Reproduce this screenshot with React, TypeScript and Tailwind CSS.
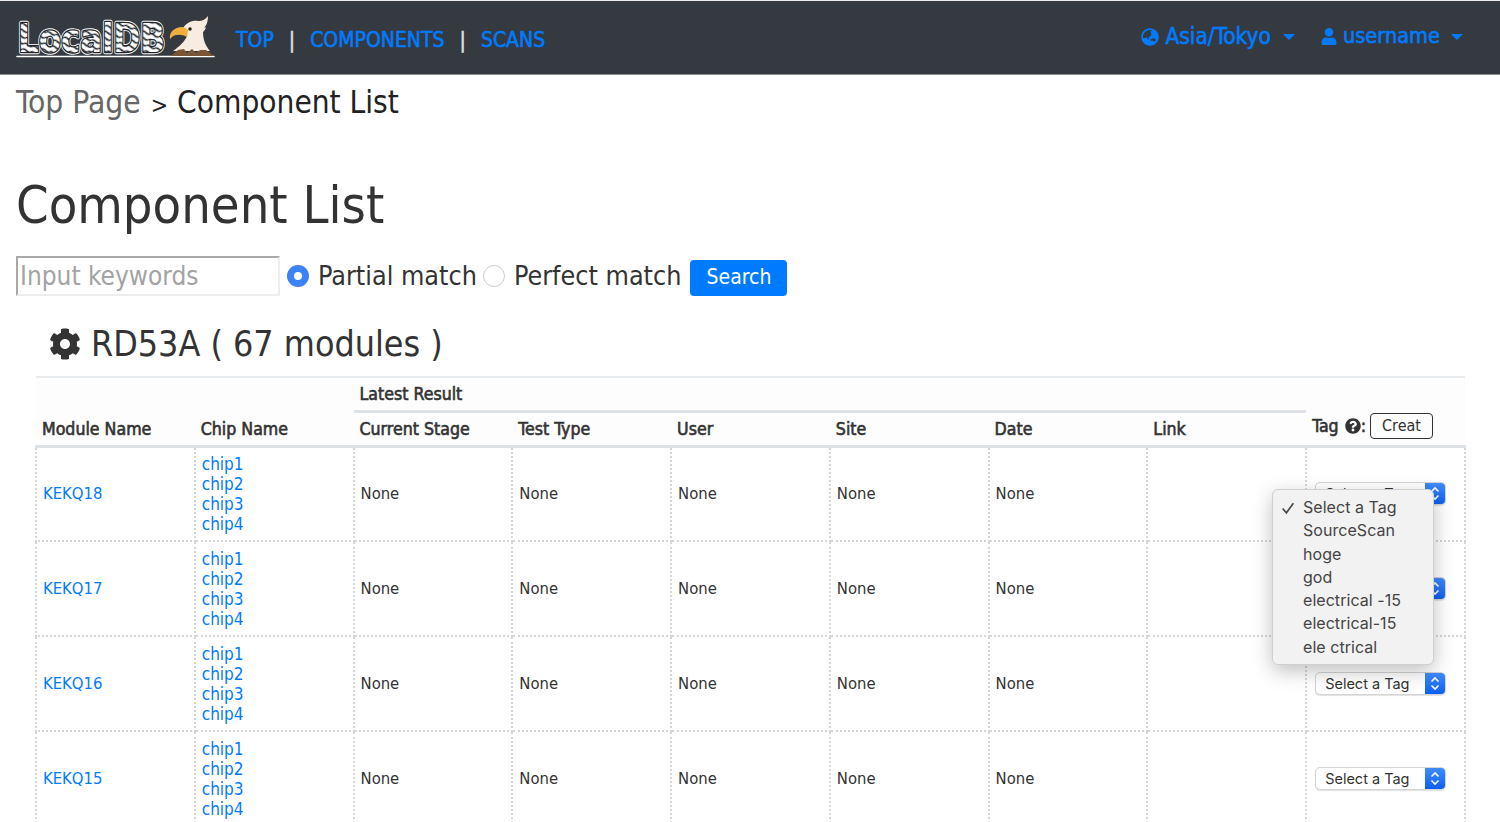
import React from "react";
import { FaGlobeAsia, FaUser, FaCog, FaQuestionCircle } from "react-icons/fa";

const font = "font-['DejaVu_Sans_Condensed','DejaVu_Sans',sans-serif]";
const faux = "font-normal [-webkit-text-stroke:0.6px_currentColor]";

function Logo() {
  const t = {
    x: 18,
    y: 51,
    fontFamily: "DejaVu Sans, sans-serif",
    fontWeight: 700,
    fontSize: 39,
    textLength: 147,
    lengthAdjust: "spacingAndGlyphs" as const,
    strokeLinejoin: "round" as const,
  };
  return (
    <svg width="202" height="48" viewBox="15 13 202 48" className="block shrink-0">
      <defs>
        <pattern id="swirl" width="9" height="12" patternUnits="userSpaceOnUse" patternTransform="rotate(18)">
          <rect width="9" height="12" fill="#fff" />
          <path d="M0 3 C3 0 6 6 9 3 M0 9 C3 6 6 12 9 9" stroke="#23272b" strokeWidth="1.7" fill="none" />
        </pattern>
      </defs>
      <text {...t} fill="#fff" stroke="#fff" strokeWidth="4.4" aria-hidden="true">LocalDB</text>
      <text {...t} fill="#23272b" stroke="#23272b" strokeWidth="2.6" aria-hidden="true">LocalDB</text>
      <text {...t} fill="url(#swirl)">LocalDB</text>
      <path d="M17 55.5 L214 55.5" stroke="#fff" strokeWidth="1.6" strokeLinecap="round" />
      <path d="M183 27 C187 21 193 19 198 20 C202 20 205 19 208 15 C208 20 207 24 204 27 C206 25 207 27 203 31 C203 38 205 44 210 50 L173 50 C180 45 185 40 187 35 Z" fill="#f8ebdf" />
      <path d="M170 38 C169 31 174 27 181 26 C184 26 186 27 188 29 L187 36 C182 33 175 33 172 36 Z" fill="#f1ae3d" />
      <circle cx="190" cy="28" r="1.7" fill="#1e1e1e" />
      <path d="M171 55 L178 49 L184 48 L187 52 L192 48 L196 52 L200 49 L206 49 L214 55 Z" fill="#7a5638" />
    </svg>
  );
}

const Chips = () => (
  <div className="flex flex-col text-[17px] leading-[20px] text-[#007bff]">
    <span>chip1</span>
    <span>chip2</span>
    <span>chip3</span>
    <span>chip4</span>
  </div>
);

function TagSelect() {
  return (
    <div className="flex h-[23px] w-[131px] items-center overflow-hidden rounded-[5px] border border-[#d4d4d4] bg-white font-['Inter',sans-serif] text-[14.5px] text-[#333] shadow-[0_1px_1px_rgba(0,0,0,0.12)]">
      <span className="flex-1 whitespace-nowrap pl-[9px]">Select a Tag</span>
      <span className="flex h-full w-[20px] items-center justify-center bg-gradient-to-b from-[#3f8cff] to-[#0a5fef]">
        <svg width="10" height="15" viewBox="0 0 10 15" fill="none" stroke="#fff" strokeWidth="1.6">
          <path d="M1.5 5.5 L5 2 L8.5 5.5" />
          <path d="M1.5 9.5 L5 13 L8.5 9.5" />
        </svg>
      </span>
    </div>
  );
}

const rows = ["KEKQ18", "KEKQ17", "KEKQ16", "KEKQ15"];

const td = "border-2 border-dotted border-[#d4d7da] align-middle";
const None = () => <td className={`${td} pl-[6px] pt-[1px] text-[16.5px]`}>None</td>;
const headers = ["Module Name", "Chip Name", "Current Stage", "Test Type", "User", "Site", "Date", "Link"];

export default function App() {
  return (
    <div className={`${font} relative h-[822px] overflow-hidden bg-white text-[#333]`}>
      <nav className="flex h-[75px] items-center border-b border-t border-b-[#8a8d90] border-t-[#eee] bg-[#343a40] pl-[15px] pr-[37px]">
        <Logo />
        <div className={`ml-[19px] mt-[6px] flex items-center text-[21px] text-[#007bff] ${faux}`}>
          <span>TOP</span>
          <span className="mx-[15px] text-[#ddd]">|</span>
          <span>COMPONENTS</span>
          <span className="mx-[15px] text-[#ddd]">|</span>
          <span>SCANS</span>
        </div>
        <div className={`ml-auto -mt-[2px] flex items-center text-[#007bff] ${faux}`}>
          <FaGlobeAsia className="mr-[6px] h-[18px] w-[18px]" />
          <span className="text-[22.5px]">Asia/Tokyo</span>
          <span className="ml-[12px] mt-[1px] h-0 w-0 border-x-[6px] border-t-[6px] border-x-transparent border-t-[#007bff]" />
          <FaUser className="ml-[26px] mr-[6px] h-[17px] w-[16px]" />
          <span className="text-[21.6px]">username</span>
          <span className="ml-[11px] mt-[1px] h-0 w-0 border-x-[6px] border-t-[6px] border-x-transparent border-t-[#007bff]" />
        </div>
      </nav>

      <div className="flex items-baseline pl-[16px] pt-[8px] text-[31.3px] leading-[38px]">
        <span className="text-[31.5px] text-[#666]">Top Page</span>
        <span className="ml-[10px] mr-[9px] text-[23px] text-[#222]">&gt;</span>
        <span className="text-[#222]">Component List</span>
      </div>

      <h1 className="ml-[16px] mt-[49px] text-[52px] leading-[64px] text-[#333]">Component List</h1>

      <div className="ml-[16px] mt-[19px] flex h-[40px] items-center text-[26.7px]">
        <div className="flex h-[40px] w-[264px] items-center border-2 border-[#a9a9a9] border-b-[#eee] border-r-[#eee] pl-[2px] text-[26px] text-[#a3a3a3]">Input keywords</div>
        <span className="ml-[7px] flex h-[22px] w-[22px] items-center justify-center rounded-full bg-[#3b82f6]">
          <span className="h-[8px] w-[8px] rounded-full bg-white" />
        </span>
        <span className="ml-[9px]">Partial match</span>
        <span className="ml-[6px] h-[22px] w-[22px] rounded-full border border-[#ccc] bg-white" />
        <span className="ml-[9px]">Perfect match</span>
        <span className="ml-[9px] mt-[4px] flex h-[36px] w-[97px] items-center justify-center rounded-[4px] bg-[#007bff] text-[21px] text-white">Search</span>
      </div>

      <h3 className="ml-[49px] mt-[26px] flex h-[44px] items-center text-[35.5px]">
        <FaCog className="mr-[10px] h-[32px] w-[32px]" />
        RD53A ( 67 modules )
      </h3>

      <table className="ml-[35px] mt-[10px] w-[1431px] table-fixed border-collapse">
        <thead className="bg-[#fdfdfd] text-[17.6px]">
          <tr className="h-[34px] border-t-2 border-[#e9ecef]">
            <th colSpan={2} />
            <th colSpan={6} className={`border-b-[3px] border-[#dee2e6] pl-[6px] text-left ${faux}`}>Latest Result</th>
            <th />
          </tr>
          <tr className="h-[35px] border-b-[3px] border-[#dee2e6] text-left">
            {headers.map((h) => (
              <th key={h} className={`pl-[6px] pt-[2px] ${faux}`}>{h}</th>
            ))}
            <th className={`pl-[6px] ${faux}`}>
              <div className="-mt-[4px] flex items-center whitespace-nowrap">
                Tag
                <FaQuestionCircle className="ml-[6px] h-[16px] w-[16px]" />:
                <span className="ml-[4px] flex h-[26px] w-[63px] items-center justify-center rounded-[4px] border border-[#333] text-[16px] [-webkit-text-stroke:0]">Creat</span>
              </div>
            </th>
          </tr>
        </thead>
        <tbody>
          {rows.map((name) => (
            <tr key={name} className="h-[95px]">
              <td className={`${td} pl-[6px] pt-[1px] text-[16.5px] text-[#007bff]`}>{name}</td>
              <td className={`${td} pl-[6px]`}><Chips /></td>
              <None /><None /><None /><None /><None />
              <td className={td} />
              <td className={`${td} pl-[8px]`}><TagSelect /></td>
            </tr>
          ))}
        </tbody>
      </table>

      <div className="absolute left-[1272px] top-[489px] w-[162px] rounded-[6px] border border-[#d0d0d0] bg-[#f2f2f2] pb-[5px] pt-[6px] font-['Inter',sans-serif] text-[16px] leading-[23.3px] tracking-[0.05px] text-[#444] shadow-[0_6px_20px_rgba(0,0,0,0.25)]">
        <svg className="absolute left-[8px] top-[11px]" width="14" height="14" viewBox="0 0 13 13" fill="none" stroke="#444" strokeWidth="1.5">
          <path d="M1.5 7 L5 11 L11.5 2" />
        </svg>
        {["Select a Tag", "SourceScan", "hoge", "god", "electrical -15", "electrical-15", "ele ctrical"].map((t) => (
          <div key={t} className="whitespace-nowrap pl-[30px]">{t}</div>
        ))}
      </div>
    </div>
  );
}
